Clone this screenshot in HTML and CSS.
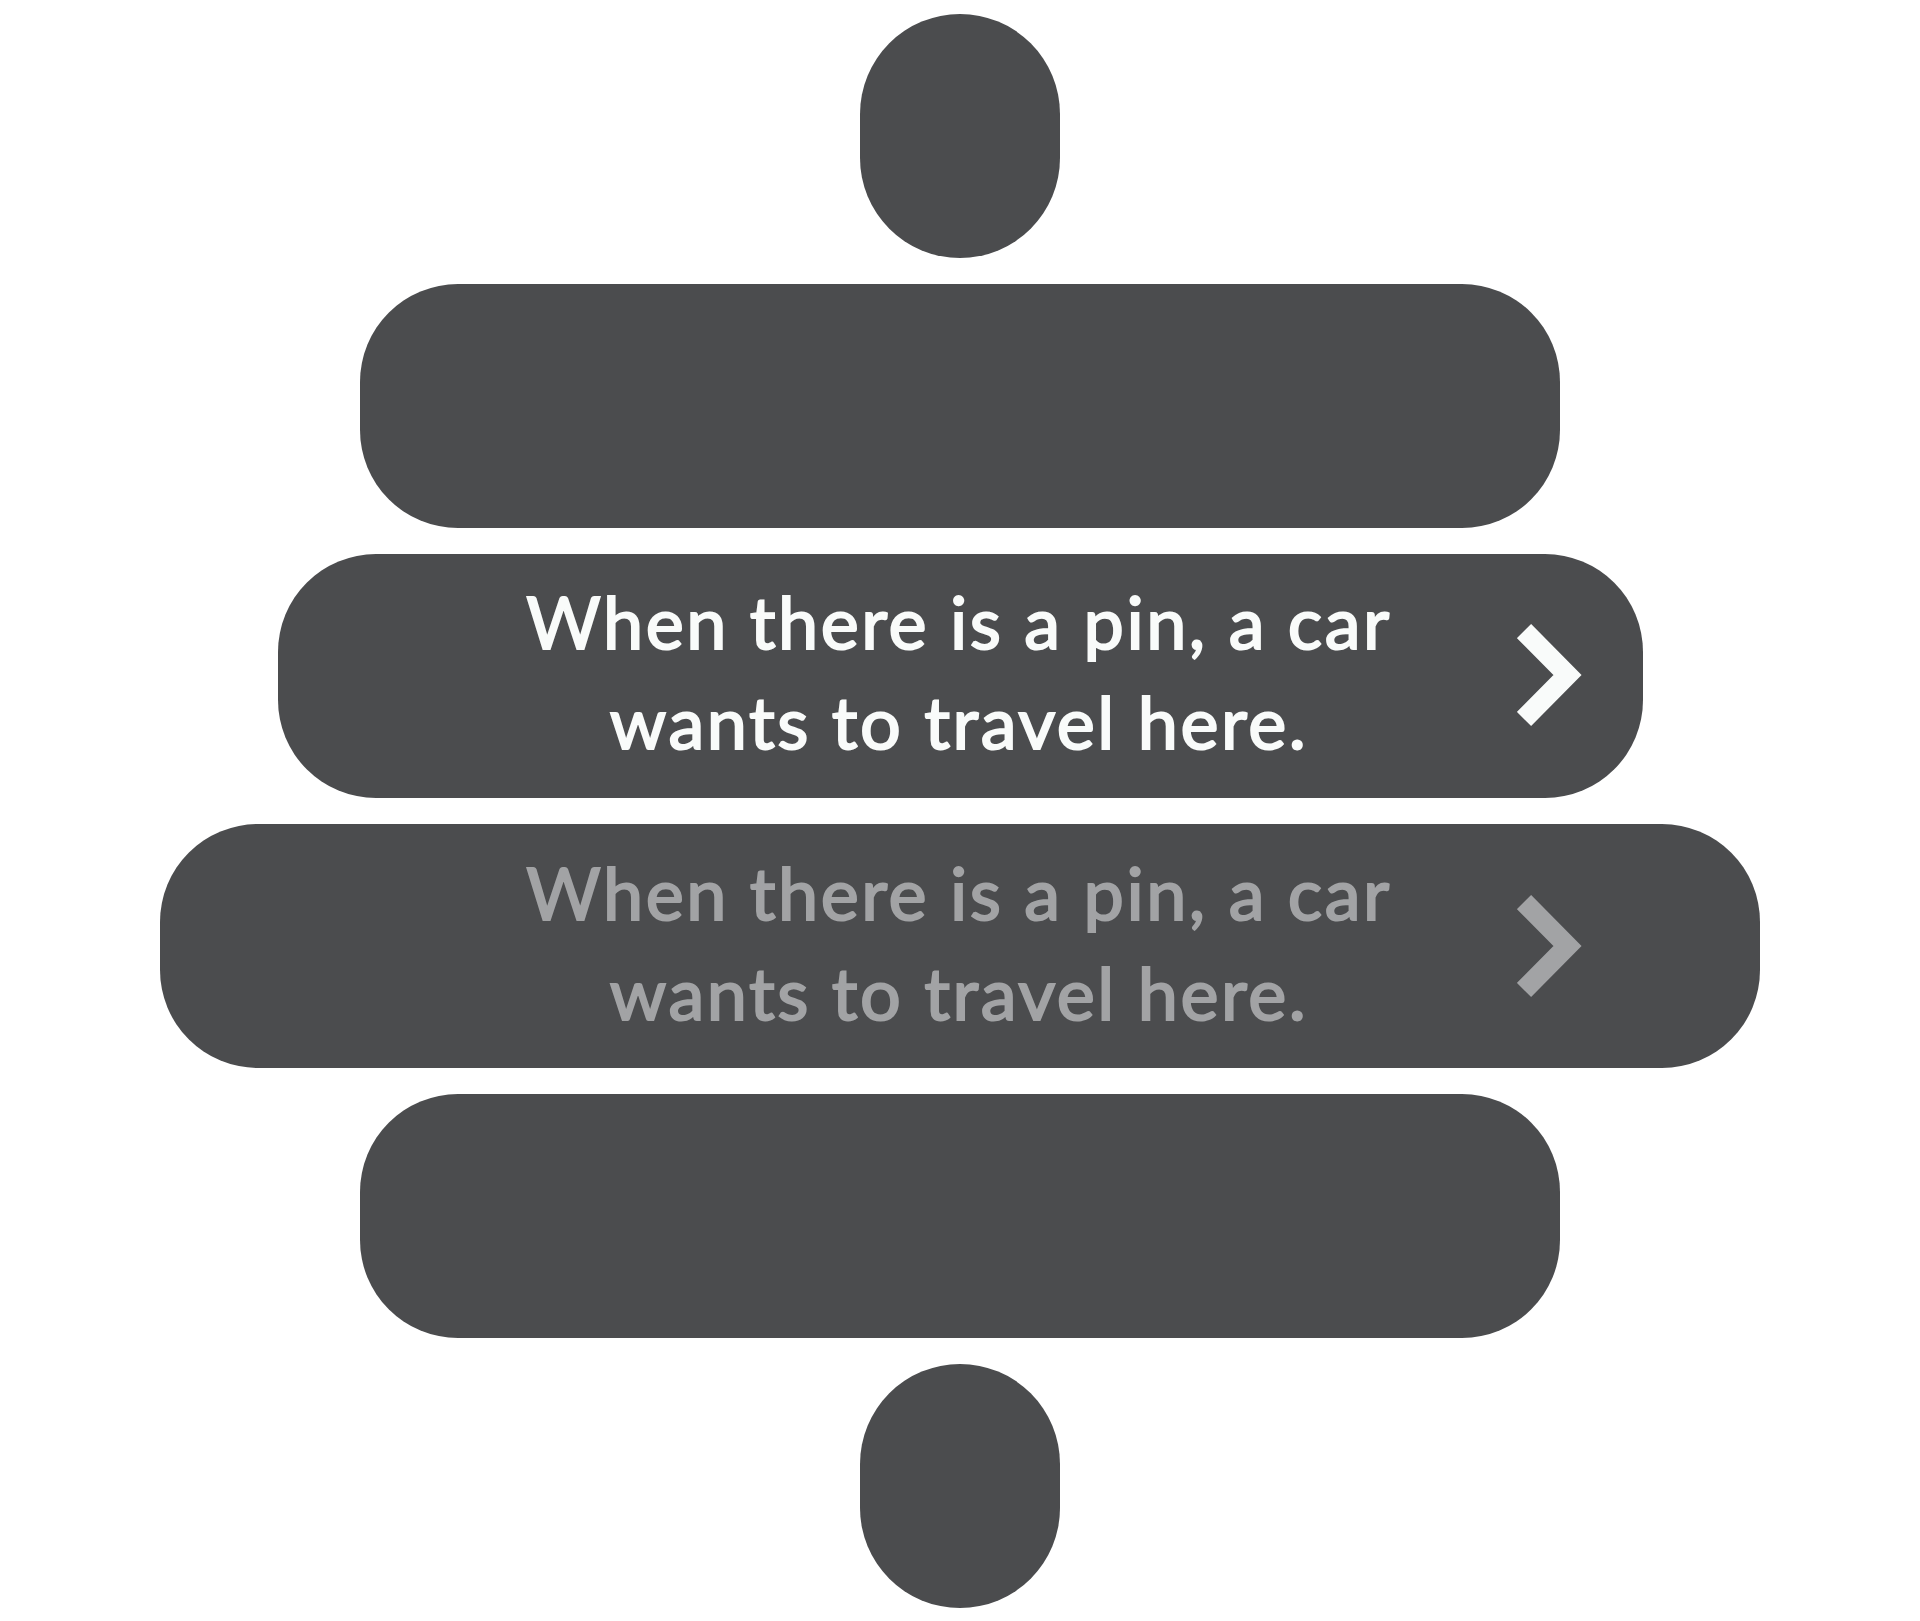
FILE: index.html
```html
<!DOCTYPE html>
<html lang="en">
<head>
<meta charset="utf-8">
<title>Pill stack</title>
<link rel="stylesheet" href="styles.css">
</head>
<body>
<main class="stack">
  <div class="pill pill-dot"></div>
  <div class="pill pill-md"></div>
  <div class="pill pill-lg">
    <div class="row">
      <span class="spacer"></span>
      <p class="label">When there is a pin, a car<br>wants to travel here.</p>
      <svg class="chev" viewBox="0 0 65 103" width="65" height="103" aria-hidden="true"><polyline points="7,7 50.5,51 7,95" fill="none" stroke="currentColor" stroke-width="20" stroke-linejoin="miter" stroke-linecap="butt"/></svg>
    </div>
  </div>
  <div class="pill pill-xl muted">
    <div class="row">
      <span class="spacer"></span>
      <p class="label">When there is a pin, a car<br>wants to travel here.</p>
      <svg class="chev" viewBox="0 0 65 103" width="65" height="103" aria-hidden="true"><polyline points="7,7 50.5,51 7,95" fill="none" stroke="currentColor" stroke-width="20" stroke-linejoin="miter" stroke-linecap="butt"/></svg>
    </div>
  </div>
  <div class="pill pill-md"></div>
  <div class="pill pill-dot"></div>
</main>
</body>
</html>
```
FILE: styles.css
```css
html, body {
  margin: 0;
  padding: 0;
  background: #ffffff;
}
.stack {
  display: flex;
  flex-direction: column;
  align-items: center;
  gap: 26.6px;
  padding-top: 14px;
}
.pill {
  height: 243.5px;
  background: #4b4c4e;
  border-radius: 98px;
  display: flex;
  align-items: center;
  justify-content: center;
  color: #f9fbfa;
}
.pill-dot { width: 200px; border-radius: 100px; }
.pill-md { width: 1200px; }
.pill-lg { width: 1365px; }
.pill-xl { width: 1600px; }
.muted { color: #a2a3a5; }
.row {
  width: 1244px;
  display: grid;
  grid-template-columns: 65px 1fr 65px;
  align-items: center;
}
.label {
  margin: 0 2px 9px 0;
  text-align: center;
  font-family: Lato, "Open Sans", sans-serif;
  font-weight: 400;
  font-size: 72px;
  line-height: 100px;
  letter-spacing: 2.5px;
  -webkit-text-stroke: 2px currentColor;
}
.chev { display: block; }
```
